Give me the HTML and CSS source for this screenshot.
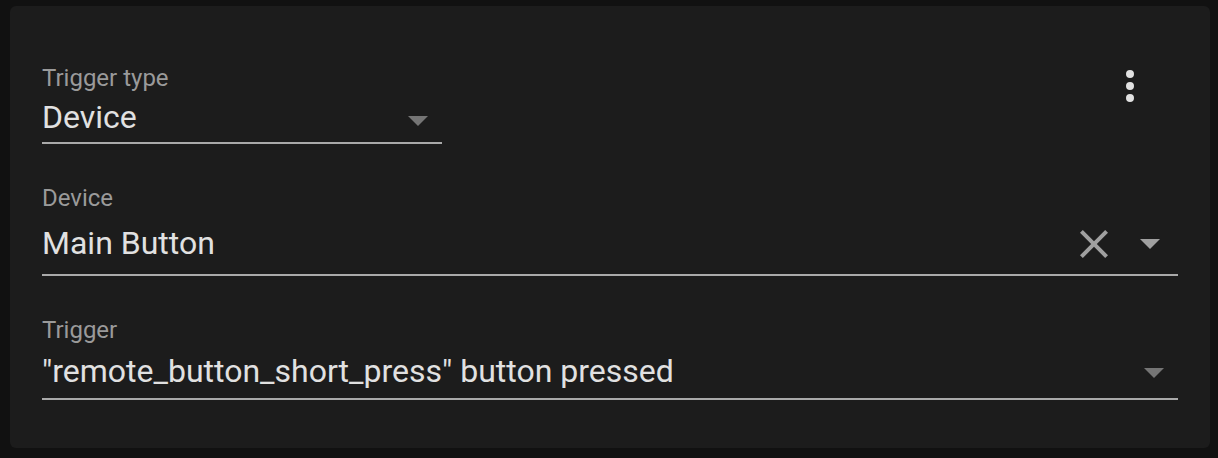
FILE: index.html
```html
<!DOCTYPE html>
<html>
<head>
<meta charset="utf-8">
<link rel="stylesheet" href="styles.css">
</head>
<body>
<div class="card">
  <div class="top-row">
    <div class="field field-type">
      <div class="label">Trigger type</div>
      <div class="value-row row-type">
        <span class="value">Device</span>
        <svg class="arrow arrow-dim arrow-type" viewBox="7 10 10 5" width="20" height="10"><path d="M7,10L12,15L17,10H7Z"/></svg>
      </div>
    </div>
    <svg class="menu" viewBox="0 0 24 24" width="48" height="48"><path d="M12,16A2,2 0 0,1 14,18A2,2 0 0,1 12,20A2,2 0 0,1 10,18A2,2 0 0,1 12,16M12,10A2,2 0 0,1 14,12A2,2 0 0,1 12,14A2,2 0 0,1 10,12A2,2 0 0,1 12,10M12,4A2,2 0 0,1 14,6A2,2 0 0,1 12,8A2,2 0 0,1 10,6A2,2 0 0,1 12,4Z"/></svg>
  </div>

  <div class="field field-device">
    <div class="label">Device</div>
    <div class="value-row row-device">
      <span class="value">Main Button</span>
      <svg class="clear" viewBox="5 5 14 14" width="28" height="28"><path d="M19,6.41L17.59,5L12,10.59L6.41,5L5,6.41L10.59,12L5,17.59L6.41,19L12,13.41L17.59,19L19,17.59L13.41,12L19,6.41Z"/></svg>
      <svg class="arrow arrow-light arrow-device" viewBox="7 10 10 5" width="20" height="10"><path d="M7,10L12,15L17,10H7Z"/></svg>
    </div>
  </div>

  <div class="field field-trigger">
    <div class="label">Trigger</div>
    <div class="value-row row-trigger">
      <span class="value">"remote_button_short_press" button pressed</span>
      <svg class="arrow arrow-dim arrow-trigger" viewBox="7 10 10 5" width="20" height="10"><path d="M7,10L12,15L17,10H7Z"/></svg>
    </div>
  </div>
</div>
</body>
</html>
```

FILE: styles.css
```css
html, body {
  margin: 0;
  background: #111111;
}
body {
  padding: 6px 8px 0 10px;
  font-family: Roboto, "Liberation Sans", sans-serif;
}
.card {
  background: #1c1c1c;
  border-radius: 6px;
  padding: 58px 32px 48px 32px;
  display: flex;
  flex-direction: column;
  gap: 40px;
}
.top-row {
  display: flex;
  justify-content: space-between;
  align-items: flex-start;
}
.field {
  display: flex;
  flex-direction: column;
}
.field-type {
  width: 400px;
}
.label {
  font-size: 24px;
  line-height: 28px;
  color: #9a9a9a;
}
.value-row {
  display: flex;
  align-items: center;
  border-bottom: 2px solid #a9a9a9;
}
.row-type { height: 50px; }
.row-device { height: 62px; }
.row-trigger { height: 54px; }
.value {
  flex: 1;
  font-size: 32px;
  line-height: 40px;
  color: #e1e1e1;
  white-space: nowrap;
}
.row-device .value {
  padding-top: 0;
}
.arrow { flex: none; }
.arrow-dim { fill: #757575; }
.arrow-light { fill: #a0a0a0; }
.arrow-type { margin: 8px 14px 0 0; }
.arrow-device { margin: 2px 18px 0 0; }
.arrow-trigger { margin: 4px 14px 0 0; }
.clear {
  flex: none;
  fill: #a0a0a0;
  margin: 2px 32px 0 0;
}
.menu {
  flex: none;
  fill: #e1e1e1;
  margin: -2px 24px 0 0;
}
```
